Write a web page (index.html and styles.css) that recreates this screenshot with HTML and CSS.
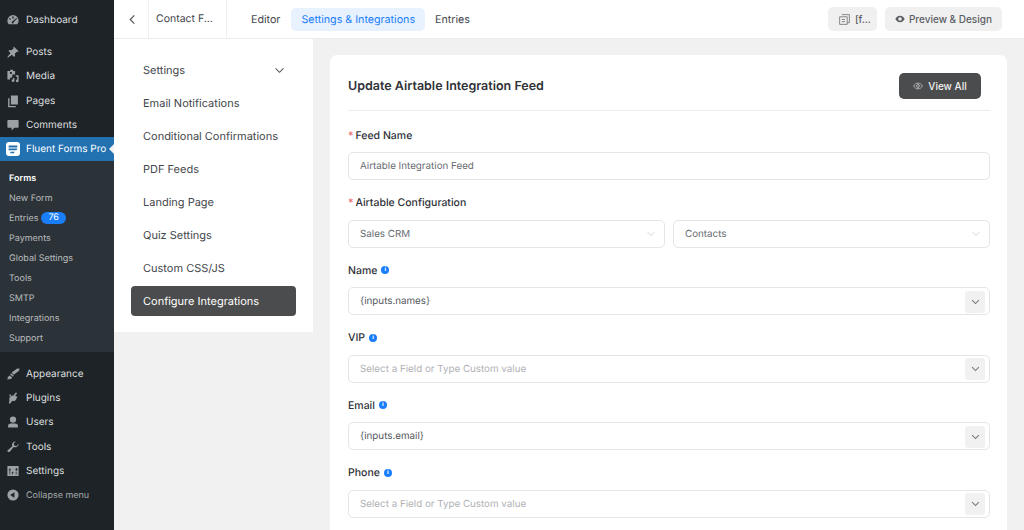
FILE: index.html
```html
<!DOCTYPE html>
<html lang="en">
<head>
    <meta charset="UTF-8">
    <title>Update Airtable Integration Feed</title>
    <link rel="stylesheet" href="styles.css">
</head>
<body>
    <div class="admin-menu">
        <a class="menu-item menu-first"><svg class="menu-icon" viewBox="0 0 20 20"><path d="M10 3a8 8 0 0 0-8 8c0 2 .7 3.700 2 5h12a8 8 0 0 0 2-5 8 8 0 0 0-8-8zM9 5h2v3H9zM5 7l2 2-1 1-2-2zm10 0 1 1-5 5a1.500 1.500 0 1 1-2-1z"/></svg>Dashboard</a>
        <div class="menu-group">
            <a class="menu-item"><svg class="menu-icon" viewBox="0 0 20 20"><path d="M11 2l7 7-1.500 1-1-.5-3 3 .5 3-1.500 1.500-3-3L3 18l-1 0 0-1 4.500-5.500-3-3L5 7l3 .5 3-3-.5-1z"/></svg>Posts</a>
            <a class="menu-item"><svg class="menu-icon" viewBox="0 0 20 20"><path d="M2 3h4V1h4v2h3v5H9v4H6v3H2zm5 1a1.500 1.500 0 1 0 .01 0zM14 9h4v8a2 2 0 1 1-2-2V11h-2zM10 13h2v3a2 2 0 1 1-2-1.500z"/></svg>Media</a>
            <a class="menu-item"><svg class="menu-icon" viewBox="0 0 20 20"><path d="M7 2h10v13H7zM3 6h2v11h9v2H3z"/></svg>Pages</a>
            <a class="menu-item"><svg class="menu-icon" viewBox="0 0 20 20"><path d="M3 3h14a1 1 0 0 1 1 1v9a1 1 0 0 1-1 1h-5l-4 4v-4H3a1 1 0 0 1-1-1V4a1 1 0 0 1 1-1z"/></svg>Comments</a>
            <a class="menu-item menu-active">
                <svg class="fluent-icon" viewBox="0 0 16 16"><rect width="16" height="16" rx="3.500" fill="#fff"/><path d="M3 4h10v2.200H3zM3 7.500h10l-1 2H3zM5 11h5l-1 1.800H5z" fill="#2271b1"/></svg>Fluent Forms Pro
            </a>
            <div class="submenu">
                <a class="sub-item sub-current">Forms</a>
                <a class="sub-item">New Form</a>
                <a class="sub-item">Entries <span class="count-badge">76</span></a>
                <a class="sub-item">Payments</a>
                <a class="sub-item">Global Settings</a>
                <a class="sub-item">Tools</a>
                <a class="sub-item">SMTP</a>
                <a class="sub-item">Integrations</a>
                <a class="sub-item">Support</a>
            </div>
        </div>
        <div class="menu-group menu-lower">
            <a class="menu-item"><svg class="menu-icon" viewBox="0 0 20 20"><path d="M19 2v3l-8 6-3-3 8-6zM7 9l4 3-1 2-4-3zM5 12l4 3-2 2-6 1 2-2-1-1z"/></svg>Appearance</a>
            <a class="menu-item"><svg class="menu-icon" viewBox="0 0 20 20"><path d="M14 2l2 1-3 4 3 1-1 3c-1 3-4 4-6 3l-3 4H4l1-5c-1-2 0-4 2-5l2-2 1 1zM5 5h2v3H5z"/></svg>Plugins</a>
            <a class="menu-item"><svg class="menu-icon" viewBox="0 0 20 20"><path d="M10 2a4 4 0 1 1 0 9 4 4 0 0 1 0-9zM3 18v-3c0-2 2-3 4-3h6c2 0 4 1 4 3v3z"/></svg>Users</a>
            <a class="menu-item"><svg class="menu-icon" viewBox="0 0 20 20"><path d="M18 5a5 5 0 0 1-7 5l-6 7a2 2 0 0 1-3-2l7-6a5 5 0 0 1 5-7l-3 3 1 3 3 1z"/></svg>Tools</a>
            <a class="menu-item"><svg class="menu-icon" viewBox="0 0 20 20"><path d="M2 3h16v14H2zm3 3v2H4v1h1v6h1V9h1V8H6V6zm4 5v1H8v1h1v2h1v-2h1v-1h-1v-1zm5-5v2h-1l1.500 2L17 8h-1V6zm0 5v4h1v-4z"/></svg>Settings</a>
            <a class="menu-item menu-collapse"><svg class="menu-icon" viewBox="0 0 20 20"><path d="M10 2a8 8 0 1 1 0 16 8 8 0 0 1 0-16zm2 4-6 4 6 4z"/></svg>Collapse menu</a>
        </div>
    </div>

    <div class="main">
        <header class="topbar">
            <div class="topbar-back"><svg class="chev-left" viewBox="0 0 10 12"><path d="M7 1.500 2.500 6 7 10.500"/></svg></div>
            <div class="topbar-title">Contact F...</div>
            <nav class="tabs">
                <a class="tab">Editor</a>
                <a class="tab tab-active">Settings &amp; Integrations</a>
                <a class="tab">Entries</a>
            </nav>
            <div class="topbar-actions">
                <button class="btn-light btn-short"><svg class="copy-icon" viewBox="0 0 12 12"><path d="M3.500 1.500h7v7.500h-2M1.500 3.500h7v7h-7zM3.500 6h3M3.500 8h3"/></svg>[f...</button>
                <button class="btn-light"><svg class="eye-icon" viewBox="0 0 14 10"><path d="M7 .5C3.800.5 1.500 3 .5 5c1 2 3.300 4.500 6.500 4.500S12.500 7 13.500 5C12.500 3 10.200.5 7 .5zm0 2a2.500 2.500 0 1 1 0 5 2.500 2.500 0 0 1 0-5z"/></svg>Preview &amp; Design</button>
            </div>
        </header>

        <div class="content">
            <aside class="side-panel">
                <a class="side-link">Settings<svg class="chev-down" viewBox="0 0 12 8"><path d="M1.500 1.500 6 6l4.500-4.500"/></svg></a>
                <a class="side-link">Email Notifications</a>
                <a class="side-link">Conditional Confirmations</a>
                <a class="side-link">PDF Feeds</a>
                <a class="side-link">Landing Page</a>
                <a class="side-link">Quiz Settings</a>
                <a class="side-link">Custom CSS/JS</a>
                <a class="side-link side-active">Configure Integrations</a>
            </aside>

            <section class="card">
                <div class="card-head">
                    <h1>Update Airtable Integration Feed</h1>
                    <button class="btn-dark"><svg class="eye-outline" viewBox="0 0 14 10"><path d="M1 5c1-2 3-4 6-4s5 2 6 4c-1 2-3 4-6 4S2 7 1 5z"/><circle cx="7" cy="5" r="2"/></svg>View All</button>
                </div>

                <div class="field field-first">
                    <label class="field-label"><span class="req">*</span> Feed Name</label>
                    <div class="input">Airtable Integration Feed</div>
                </div>

                <div class="field">
                    <label class="field-label"><span class="req">*</span> Airtable Configuration</label>
                    <div class="select-row">
                        <div class="input">Sales CRM<svg class="select-chev" viewBox="0 0 12 8"><path d="M1.500 1.500 6 6l4.500-4.500"/></svg></div>
                        <div class="input">Contacts<svg class="select-chev" viewBox="0 0 12 8"><path d="M1.500 1.500 6 6l4.500-4.500"/></svg></div>
                    </div>
                </div>

                <div class="field">
                    <label class="field-label">Name <span class="info">i</span></label>
                    <div class="input input-value">{inputs.names}<span class="combo-btn"><svg viewBox="0 0 12 8"><path d="M1.500 1.500 6 6l4.500-4.500"/></svg></span></div>
                </div>

                <div class="field">
                    <label class="field-label">VIP <span class="info">i</span></label>
                    <div class="input input-empty">Select a Field or Type Custom value<span class="combo-btn"><svg viewBox="0 0 12 8"><path d="M1.500 1.500 6 6l4.500-4.500"/></svg></span></div>
                </div>

                <div class="field">
                    <label class="field-label">Email <span class="info">i</span></label>
                    <div class="input input-value">{inputs.email}<span class="combo-btn"><svg viewBox="0 0 12 8"><path d="M1.500 1.500 6 6l4.500-4.500"/></svg></span></div>
                </div>

                <div class="field">
                    <label class="field-label">Phone <span class="info">i</span></label>
                    <div class="input input-empty">Select a Field or Type Custom value<span class="combo-btn"><svg viewBox="0 0 12 8"><path d="M1.500 1.500 6 6l4.500-4.500"/></svg></span></div>
                </div>
            </section>
        </div>
    </div>
</body>
</html>
```

FILE: styles.css
```css
* {
    box-sizing: border-box;
}

html, body {
    height: 530px;
    overflow: hidden;
}

body {
    margin: 0;
    display: flex;
    font-family: Inter, "Liberation Sans", sans-serif;
    text-rendering: geometricPrecision;
    background-color: #f1f1f1;
    color: #2f3237;
}

/* wordpress sidebar */
.admin-menu {
    width: 114px;
    flex-shrink: 0;
    background-color: #1d2327;
    padding-top: 8px;
    font-size: 10px;
    color: #dcdedf;
}

.menu-group {
    margin-top: 8px;
}

.menu-lower {
    margin-top: 9px;
}

.menu-item {
    display: flex;
    align-items: center;
    height: 24.3px;
    padding-left: 6px;
    gap: 6px;
}

.menu-first {
    height: 24px;
}

.menu-icon {
    width: 14px;
    height: 14px;
    fill: #9ca1a6;
    flex-shrink: 0;
}

.menu-active {
    position: relative;
    background-color: #2271b1;
    color: #ffffff;
}

.menu-active::after {
    content: "";
    position: absolute;
    right: 0;
    top: 7px;
    border: 5px solid transparent;
    border-right-color: #f1f1f1;
    border-left-width: 0;
}

.fluent-icon {
    width: 14px;
    height: 14px;
}

.menu-collapse {
    color: #a7aaad;
    font-size: 9px;
}

.submenu {
    background-color: #2c3338;
    padding: 7px 0 0;
    height: 191px;
    color: #b9bcbf;
    font-size: 9px;
}

.sub-item {
    display: flex;
    align-items: center;
    height: 20px;
    padding-left: 9px;
    gap: 3px;
}

.sub-current {
    color: #ffffff;
    font-weight: 600;
}

.count-badge {
    background-color: #1a7efb;
    color: #ffffff;
    border-radius: 7px;
    padding: 0 7px;
    height: 12px;
    line-height: 12px;
    font-size: 9px;
}

/* main area */
.main {
    flex: 1;
    display: flex;
    flex-direction: column;
    min-width: 0;
}

.topbar {
    height: 39px;
    flex-shrink: 0;
    display: flex;
    align-items: center;
    background-color: #ffffff;
    border-bottom: 1px solid #ececec;
    font-size: 10.500px;
}

.topbar-back {
    width: 35px;
    height: 38px;
    display: flex;
    align-items: center;
    justify-content: center;
    padding-left: 3px;
    border-right: 1px solid #f0f0f0;
}

.chev-left {
    width: 9px;
    height: 11px;
    fill: none;
    stroke: #555;
    stroke-width: 1.300;
}

.topbar-title {
    width: 78px;
    height: 38px;
    line-height: 38px;
    padding-left: 7px;
    border-right: 1px solid #f0f0f0;
    color: #44474c;
}

.tabs {
    display: flex;
    align-items: center;
    margin-left: 14px;
    font-size: 10.700px;
}

.tab {
    padding: 0 10px;
    height: 23px;
    line-height: 23px;
    border-radius: 5px;
    color: #44474c;
}

.tab-active {
    margin-left: 1px;
    background-color: #e8f2fe;
    color: #1a7efb;
}

.topbar-actions {
    margin-left: auto;
    margin-right: 22px;
    display: flex;
    gap: 8px;
}

.btn-light {
    display: flex;
    align-items: center;
    gap: 4px;
    height: 24px;
    padding: 0 10px;
    border: none;
    border-radius: 5px;
    background-color: #f0f0f1;
    color: #5b5e63;
    font-family: inherit;
    font-size: 10px;
    font-weight: 500;
}

.btn-short {
    width: 49px;
}

.copy-icon {
    width: 13px;
    height: 13px;
    flex-shrink: 0;
    fill: none;
    stroke: #777;
    stroke-width: 0.800;
}

.eye-icon {
    width: 10px;
    height: 8px;
    fill: currentColor;
    flex-shrink: 0;
}

.eye-outline {
    width: 10px;
    height: 8px;
    fill: none;
    stroke: #c4c5c6;
    stroke-width: 1.200;
    flex-shrink: 0;
}

.content {
    flex: 1;
    display: flex;
    align-items: flex-start;
    min-height: 0;
}

.side-panel {
    width: 199px;
    height: 293px;
    flex-shrink: 0;
    background-color: #ffffff;
    padding: 16px 17px 0;
    display: flex;
    flex-direction: column;
    gap: 3px;
}

.side-link {
    display: flex;
    align-items: center;
    justify-content: space-between;
    height: 30px;
    padding: 0 12px;
    border-radius: 4px;
    font-size: 11px;
    color: #44474c;
}

.side-active {
    background-color: #4b4c4d;
    color: #ffffff;
}

.chev-down {
    width: 11px;
    height: 7px;
    margin-right: -1px;
    fill: none;
    stroke: #555;
    stroke-width: 1.200;
}

.card {
    margin: 16px 17px 0;
    flex: 1;
    height: 500px;
    background-color: #ffffff;
    border-radius: 7px 7px 0 0;
    padding: 18px 17px 0 18px;
}

.card-head {
    display: flex;
    align-items: center;
    justify-content: space-between;
    height: 38px;
    padding: 0 9px 11px 0;
    border-bottom: 1px solid #ececec;
}

.card-head h1 {
    margin: 0;
    font-size: 12.500px;
    font-weight: 600;
    color: #2f3237;
}

.btn-dark {
    display: flex;
    align-items: center;
    justify-content: center;
    gap: 5px;
    width: 82px;
    height: 26px;
    border: none;
    border-radius: 5px;
    background-color: #4b4c4d;
    color: #f0f0f0;
    font-family: inherit;
    font-size: 10px;
    font-weight: 500;
}

.field {
    margin-top: 14px;
}

.field-first {
    margin-top: 15.500px;
}

.field-label {
    display: flex;
    align-items: center;
    gap: 2px;
    height: 17px;
    margin-bottom: 8.500px;
    font-size: 10.500px;
    font-weight: 500;
    color: #2f3237;
}

.req {
    color: #ec6a6e;
}

.info {
    display: inline-block;
    width: 8px;
    height: 8px;
    margin-left: 2px;
    border-radius: 50%;
    background-color: #1a7efb;
    color: #ffffff;
    font-size: 6px;
    font-weight: 700;
    line-height: 8px;
    text-align: center;
}

.input {
    flex: 1;
    display: flex;
    align-items: center;
    justify-content: space-between;
    height: 28px;
    padding: 1px 6px 0 11px;
    border: 1px solid #e4e5e7;
    border-radius: 5px;
    background-color: #ffffff;
    font-size: 9.800px;
    color: #686b70;
}

.input-value {
    color: #55585d;
}

.input-empty {
    color: #b0b2b6;
}

.select-row {
    display: flex;
    gap: 8px;
}

.select-chev {
    width: 10px;
    height: 6px;
    margin-right: 2px;
    fill: none;
    stroke: #c4c6c9;
    stroke-width: 1;
}

.combo-btn {
    display: flex;
    align-items: center;
    justify-content: center;
    width: 20px;
    height: 22px;
    border-radius: 3px;
    background-color: #f1f1f1;
    margin-right: -2px;
}

.combo-btn svg {
    width: 9px;
    height: 6px;
    fill: none;
    stroke: #777;
    stroke-width: 1.400;
}
```
